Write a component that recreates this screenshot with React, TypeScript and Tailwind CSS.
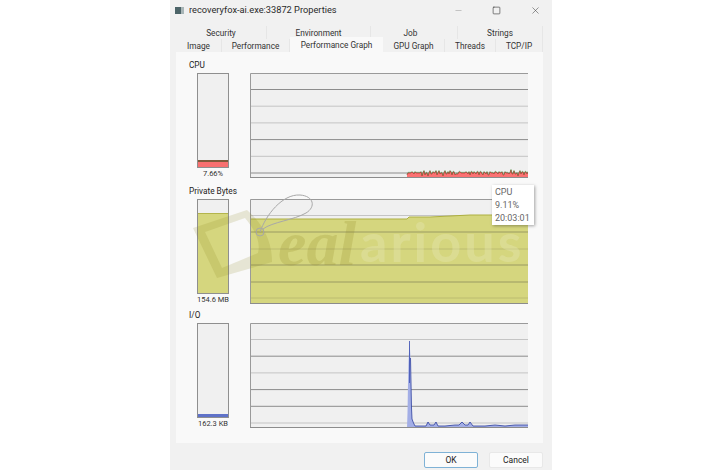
import { Minus, Square, X } from "lucide-react";

const DARK = "#8c8c8c";
const LIGHT = "#c4c4c4";

const cpuNoise = [4, 5, 4, 6, 5, 5, 6, 4, 5, 6, 5, 4, 6, 5, 5, 3, 5, 6, 4, 5, 4, 3, 5, 6, 5, 4, 5, 6, 5, 6, 4, 5, 6, 5, 5, 4, 3, 5, 6, 5, 4, 5, 5, 7, 5, 4, 6, 5, 4, 4, 3, 5, 6, 5, 6, 5, 4, 6, 5, 5, 6];

function cpuLine(offset: number) {
  return Array.from({ length: 122 }, (_, i) => {
    const v = cpuNoise[i % 61] + ((i * 7) % 3) - 1;
    return `${157 + i},${105 - v - offset}`;
  }).join(" ");
}

const ioPts: [number, number][] = [
  [157, 105], [157.5, 90], [158, 60], [158.5, 40], [159.5, 17], [160.5, 35], [161, 60], [161.5, 85], [162, 96], [163.5, 100], [165, 103], [170, 103], [176, 103], [178, 99], [180, 102], [184, 102], [186, 99], [188, 103], [195, 103], [205, 102], [209, 102], [212, 99], [215, 102], [218, 102], [220, 99], [223, 103], [235, 103], [245, 102], [255, 103], [265, 102], [278, 102],
];

function Graph({ lines, children }: { lines: string[]; children?: React.ReactNode }) {
  return (
    <svg width="278" height="105" viewBox="0 0 278 105" className="block shrink-0 bg-[#f0f0f0]">
      {lines.map((c, i) => (
        <line key={i} x1="0" x2="278" y1={16.5 + i * 16.7} y2={16.5 + i * 16.7} stroke={c} strokeWidth="1" />
      ))}
      {children}
      <path d="M0.5 105V0.5H278" fill="none" stroke="#9a9a9a" />
      <path d="M0 104.5H278" fill="none" stroke="#8c8c8c" />
    </svg>
  );
}

function Meter({ value, fill }: { value: string; fill: React.ReactNode }) {
  return (
    <div className="w-[32px] h-[105px] shrink-0 flex flex-col items-center">
      <div className="w-[32px] h-[95px] shrink-0 border border-[#8f8f8f] bg-[#f0f0f0] flex flex-col justify-end">{fill}</div>
      <div className="text-[7.5px] leading-[10px] mt-px whitespace-nowrap text-[#333]">{value}</div>
    </div>
  );
}

function Section({ label, value, fill, className, lines, children }: { label: string; value: string; fill: React.ReactNode; className: string; lines: string[]; children?: React.ReactNode }) {
  return (
    <div className={className}>
      <div className="text-[8.25px] leading-[13px] pl-[13px] text-[#222]">{label}</div>
      <div className="flex pl-[21px] gap-[21px] mt-px">
        <Meter value={value} fill={fill} />
        <Graph lines={lines}>{children}</Graph>
      </div>
    </div>
  );
}

function Tab({ label, w, active }: { label: string; w: string; active?: boolean }) {
  return (
    <div className={`${w} ${active ? "bg-[#f9f9f9] h-[15px] -mt-[2px] pt-[1px] relative z-10" : "h-[13px] pt-px border-r border-[#e6e6e6]"} flex items-center justify-center text-[8.25px] text-[#333] whitespace-nowrap`}>
      {label}
    </div>
  );
}

export default function App() {
  return (
    <div className="w-[720px] h-[470px] bg-white overflow-hidden relative font-['Roboto',sans-serif]">
      <div className="ml-[170px] w-[382px] h-[470px] bg-[#f1f1f1] flex flex-col">
        <div className="h-[20px] flex items-center pl-[5px] shrink-0">
          <div className="w-[9px] h-[7px] bg-[#4c6468] border-r-[3px] border-[#a9b6b8] mr-[5px]" />
          <div className="text-[9.25px] text-[#2a2a2a] whitespace-nowrap">recoveryfox-ai.exe:33872 Properties</div>
          <div className="ml-auto flex items-center mr-[11px] gap-[29px]">
            <Minus size={9} strokeWidth={1} color="#777" />
            <Square size={9} strokeWidth={1.6} color="#333" />
            <X size={11} strokeWidth={1.2} color="#444" />
          </div>
        </div>

        <div className="mx-[6px] w-[367px] mt-[6px] flex">
          <Tab label="Security" w="w-[91px]" />
          <Tab label="Environment" w="w-[104px]" />
          <Tab label="Job" w="w-[87px] pr-[7px]" />
          <Tab label="Strings" w="w-[85px]" />
        </div>
        <div className="mx-[6px] w-[367px] flex">
          <Tab label="Image" w="w-[46px]" />
          <Tab label="Performance" w="w-[68px]" />
          <Tab label="Performance Graph" w="w-[93px]" active />
          <Tab label="GPU Graph" w="w-[62px]" />
          <Tab label="Threads" w="w-[51px]" />
          <Tab label="TCP/IP" w="w-[47px]" />
        </div>

        <div className="mx-[6px] w-[367px] h-[391px] bg-[#f9f9f9] pt-[7px] shrink-0">
          <Section
            label="CPU"
            value="7.66%"
            className=""
            lines={[DARK, LIGHT, LIGHT, DARK, LIGHT, DARK]}
            fill={<div className="h-[7px] bg-[#f87070] border-t-2 border-[#7f5a3a]" />}
          >
            <polygon points={`157,105 ${cpuLine(0)} 278,105`} fill="#fb7272" />
            <polyline points={cpuLine(0)} fill="none" stroke="#b92a2a" strokeWidth="0.7" />
            <polyline points={cpuLine(0.7)} fill="none" stroke="#4f8a3c" strokeWidth="0.5" />
          </Section>

          <Section
            label="Private Bytes"
            value="154.6 MB"
            className="mt-[7px]"
            lines={[LIGHT, DARK, LIGHT, DARK, LIGHT, LIGHT]}
            fill={<div className="h-[80px] bg-[#d5d67e] border-t border-[#b4b54c]" />}
          >
            <polygon points="0,105 0,20 157,20 159,18 180,18 220,16 278,16 278,105" fill="#d5d67e" />
            <polyline points="0,20 157,20 159,18 180,18 220,16 278,16" fill="none" stroke="#aeb040" strokeWidth="1" />
            {[33, 66, 83].map((y) => (
              <line key={y} x1="0" x2="278" y1={y} y2={y} stroke="#9a9a62" strokeWidth="1" />
            ))}
            {[50, 99].map((y) => (
              <line key={y} x1="0" x2="278" y1={y} y2={y} stroke="#bcbc70" strokeWidth="1" />
            ))}
          </Section>

          <Section
            label="I/O"
            value="162.3 KB"
            className="mt-[5px]"
            lines={[LIGHT, DARK, LIGHT, DARK, DARK, LIGHT]}
            fill={<div className="h-[3px] bg-[#5f72c8]" />}
          >
            <polygon points={`157,105 ${ioPts.map((p) => p.join(",")).join(" ")} 278,105`} fill="#a3aee6" />
            <polyline points={ioPts.slice(5).map((p) => p.join(",")).join(" ")} fill="none" stroke="#2d3f9e" strokeWidth="0.8" />
            <polyline points="159.5,18 159.5,60" fill="none" stroke="#3a4db0" strokeWidth="0.8" />
          </Section>
        </div>

        <div className="flex justify-end gap-[11px] mr-[9px] mt-[9px]">
          <button className="w-[54px] h-[16px] bg-[#fbfbfb] border border-[#7fb2d6] rounded-[2px] text-[8.5px] text-[#222]">OK</button>
          <button className="w-[54px] h-[16px] bg-[#fbfbfb] border border-[#e8e8e8] rounded-[2px] text-[8.5px] text-[#222]">Cancel</button>
        </div>
      </div>

      {/* watermark sits over the graphs */}
      <svg width="720" height="470" viewBox="0 0 720 470" className="absolute left-0 top-0 pointer-events-none">
        <path fill="#8a8420" fillOpacity="0.17" fillRule="evenodd" d="M193 228L247 210Q272 232 272 262L217 278ZM205 232L222 268L258 253Q262 238 245 218Z" />
        <path d="M260 232C266 215 282 194 300 195C314 196 316 207 306 213C294 220 272 222 263 229" fill="none" stroke="#a8a8a8" strokeWidth="1" />
        <circle cx="260" cy="232" r="4" fill="none" stroke="#a8a8a8" strokeWidth="1" />
      </svg>
      <div className="absolute left-[278px] top-[207px] text-[64px] leading-[74px] font-bold italic text-[#8a8420]/20 font-['Liberation_Serif',serif] pointer-events-none">eal</div>
      <div className="absolute left-[360px] top-[226px] text-[54px] leading-[32px] font-bold tracking-[3px] text-[#e8e8b8]/35 font-['Lato',sans-serif] pointer-events-none">arious</div>

      <div className="absolute left-[492px] top-[185px] w-[42px] h-[40px] bg-white shadow-[1px_1px_3px_rgba(0,0,0,0.35)] pl-[3px] pt-px text-[9px] leading-[13px] text-[#666]">
        <div>CPU</div>
        <div>9.11%</div>
        <div>20:03:01</div>
      </div>
    </div>
  );
}
